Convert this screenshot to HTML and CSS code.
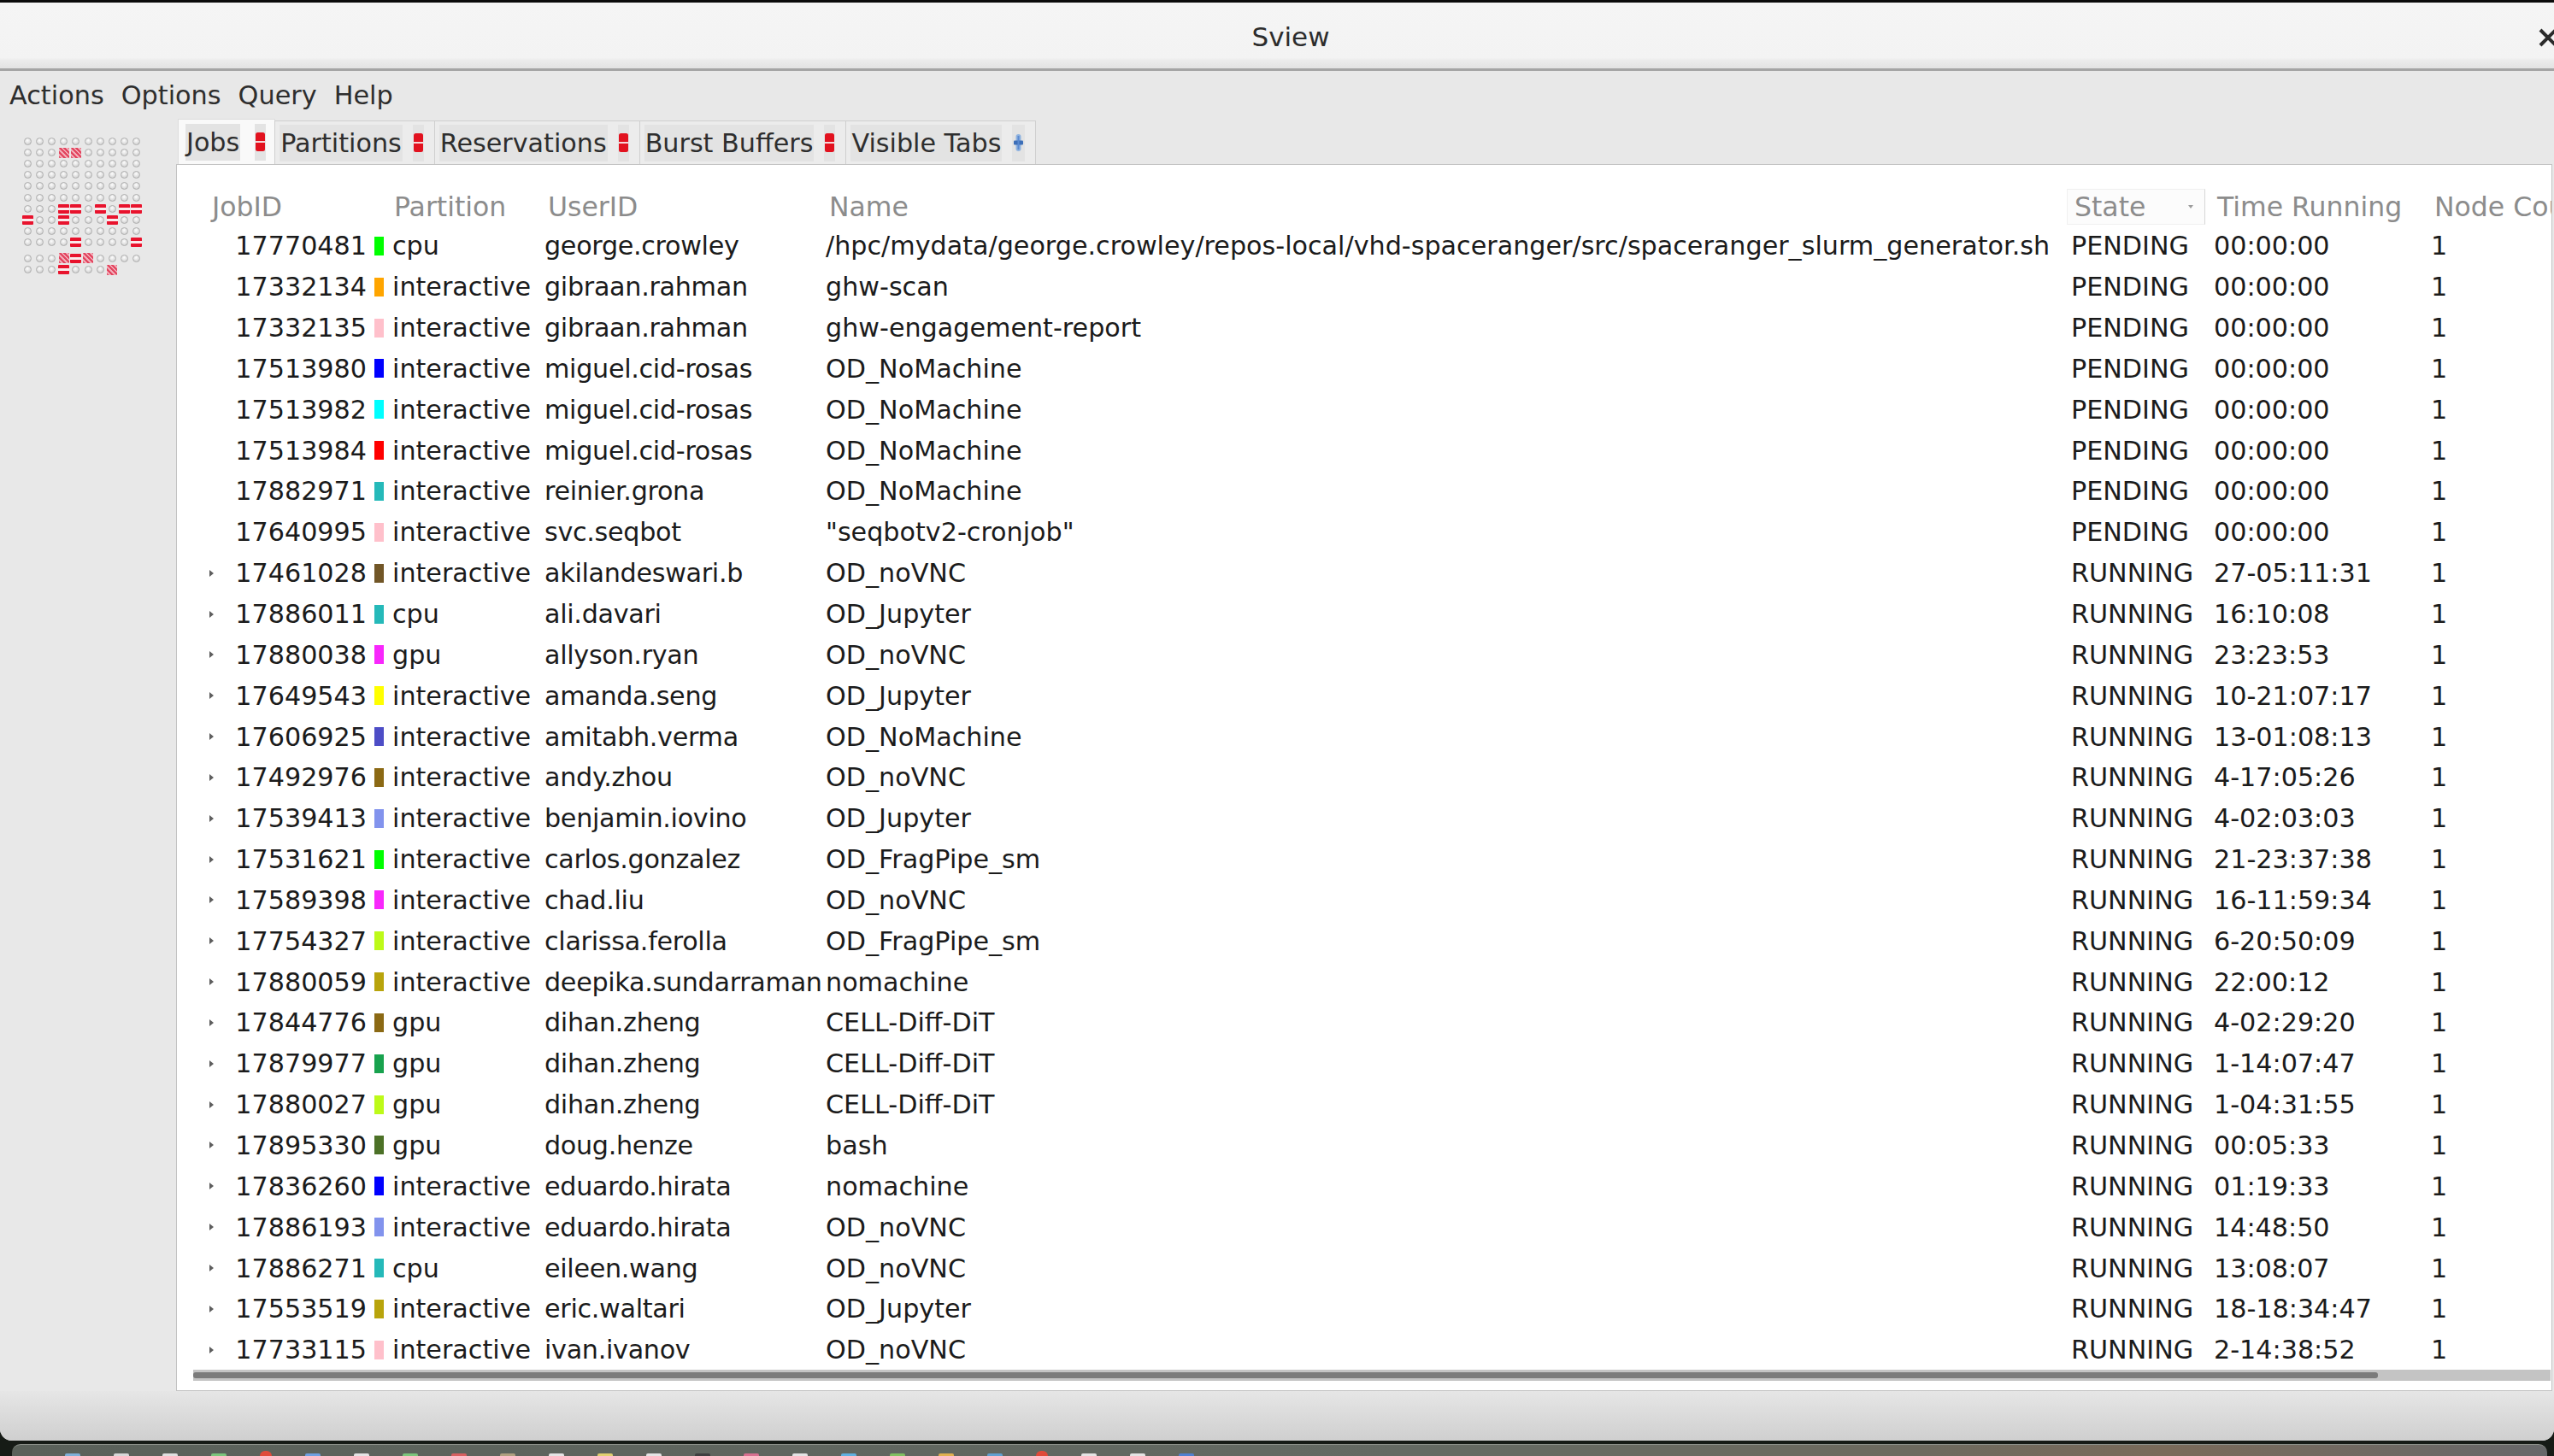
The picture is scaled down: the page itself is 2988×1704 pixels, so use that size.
FILE: index.html
```html
<!DOCTYPE html>
<html>
<head>
<meta charset="utf-8">
<title>Sview</title>
<link rel="stylesheet" href="styles.css">
</head>
<body>
<div class="window">
  <header class="titlebar">
    <div class="title">Sview</div>
    <div class="close"><svg width="24" height="22" viewBox="0 0 24 22"><path d="M2 2 L20 20 M20 2 L2 20" stroke="#2a2a2a" stroke-width="4" fill="none"/></svg></div>
  </header>
  <nav class="menubar">
    <span>Actions</span><span>Options</span><span>Query</span><span>Help</span>
  </nav>
  <div class="main">
    <aside class="nodes">
      <div class="nodeblock">
        <i class="n"></i><i class="n"></i><i class="n"></i><i class="n"></i><i class="n"></i><i class="n"></i><i class="n"></i><i class="n"></i><i class="n"></i><i class="n"></i>
        <i class="n"></i><i class="n"></i><i class="n"></i><i class="n m"></i><i class="n m"></i><i class="n"></i><i class="n"></i><i class="n"></i><i class="n"></i><i class="n"></i>
        <i class="n"></i><i class="n"></i><i class="n"></i><i class="n"></i><i class="n"></i><i class="n"></i><i class="n"></i><i class="n"></i><i class="n"></i><i class="n"></i>
        <i class="n"></i><i class="n"></i><i class="n"></i><i class="n"></i><i class="n"></i><i class="n"></i><i class="n"></i><i class="n"></i><i class="n"></i><i class="n"></i>
        <i class="n"></i><i class="n"></i><i class="n"></i><i class="n"></i><i class="n"></i><i class="n"></i><i class="n"></i><i class="n"></i><i class="n"></i><i class="n"></i>
        <i class="n"></i><i class="n"></i><i class="n"></i><i class="n"></i><i class="n"></i><i class="n"></i><i class="n"></i><i class="n"></i><i class="n"></i><i class="n"></i>
        <i class="n"></i><i class="n"></i><i class="n"></i><i class="n a"></i><i class="n a"></i><i class="n"></i><i class="n a"></i><i class="n"></i><i class="n a"></i><i class="n a"></i>
        <i class="n a"></i><i class="n"></i><i class="n"></i><i class="n a"></i><i class="n"></i><i class="n"></i><i class="n"></i><i class="n a"></i><i class="n"></i><i class="n"></i>
        <i class="n"></i><i class="n"></i><i class="n"></i><i class="n"></i><i class="n"></i><i class="n"></i><i class="n"></i><i class="n"></i><i class="n"></i><i class="n"></i>
        <i class="n"></i><i class="n"></i><i class="n"></i><i class="n"></i><i class="n a"></i><i class="n"></i><i class="n"></i><i class="n"></i><i class="n"></i><i class="n a"></i>
      </div>
      <div class="nodeblock">
        <i class="n"></i><i class="n"></i><i class="n"></i><i class="n m"></i><i class="n a"></i><i class="n m"></i><i class="n"></i><i class="n"></i><i class="n"></i><i class="n"></i>
        <i class="n"></i><i class="n"></i><i class="n"></i><i class="n a"></i><i class="n"></i><i class="n"></i><i class="n"></i><i class="n m"></i>
      </div>
    </aside>
    <section class="notebook">
      <div class="tabs">
        <div class="tab active"><span class="tab-label">Jobs</span><span class="tab-btn"><svg class="red" width="11" height="22" viewBox="0 0 11 22"><rect x="0" y="0" width="11" height="22" rx="2.5" fill="#e2121f"/><rect x="0" y="10" width="11" height="2" fill="#f6d6d8"/></svg></span></div>
        <div class="tab"><span class="tab-label">Partitions</span><span class="tab-btn"><svg class="red" width="11" height="22" viewBox="0 0 11 22"><rect x="0" y="0" width="11" height="22" rx="2.5" fill="#e2121f"/><rect x="0" y="10" width="11" height="2" fill="#f6d6d8"/></svg></span></div>
        <div class="tab"><span class="tab-label">Reservations</span><span class="tab-btn"><svg class="red" width="11" height="22" viewBox="0 0 11 22"><rect x="0" y="0" width="11" height="22" rx="2.5" fill="#e2121f"/><rect x="0" y="10" width="11" height="2" fill="#f6d6d8"/></svg></span></div>
        <div class="tab"><span class="tab-label">Burst Buffers</span><span class="tab-btn"><svg class="red" width="11" height="22" viewBox="0 0 11 22"><rect x="0" y="0" width="11" height="22" rx="2.5" fill="#e2121f"/><rect x="0" y="10" width="11" height="2" fill="#f6d6d8"/></svg></span></div>
        <div class="tab"><span class="tab-label">Visible Tabs</span><span class="tab-btn"><svg width="13" height="22" viewBox="0 0 13 22"><rect x="3.5" y="1" width="6" height="20" rx="3" fill="#8fb3e0"/><rect x="1" y="8.5" width="11" height="5" rx="1" fill="#3d6fb8"/><rect x="5.5" y="3" width="2" height="16" fill="#5a8ad0"/></svg></span></div>
      </div>
      <div class="page">
        <div class="table">
          <div class="thead">
            <div class="th c1">JobID</div>
            <div class="th c2">Partition</div>
            <div class="th c3">UserID</div>
            <div class="th c4">Name</div>
            <div class="th c5"><div class="sortbox"><span>State</span><i class="sortarrow"></i></div></div>
            <div class="th c6">Time Running</div>
            <div class="th c7">Node Count</div>
          </div>

          <div class="tr"><div class="c1"><i class="exp none"></i><span>17770481</span></div><div class="c2"><i class="sw" style="background:#00ff00"></i>cpu</div><div class="c3">george.crowley</div><div class="c4">/hpc/mydata/george.crowley/repos-local/vhd-spaceranger/src/spaceranger_slurm_generator.sh</div><div class="c5">PENDING</div><div class="c6">00:00:00</div><div class="c7">1</div></div>
          <div class="tr"><div class="c1"><i class="exp none"></i><span>17332134</span></div><div class="c2"><i class="sw" style="background:#ffa500"></i>interactive</div><div class="c3">gibraan.rahman</div><div class="c4">ghw-scan</div><div class="c5">PENDING</div><div class="c6">00:00:00</div><div class="c7">1</div></div>
          <div class="tr"><div class="c1"><i class="exp none"></i><span>17332135</span></div><div class="c2"><i class="sw" style="background:#ffc0cb"></i>interactive</div><div class="c3">gibraan.rahman</div><div class="c4">ghw-engagement-report</div><div class="c5">PENDING</div><div class="c6">00:00:00</div><div class="c7">1</div></div>
          <div class="tr"><div class="c1"><i class="exp none"></i><span>17513980</span></div><div class="c2"><i class="sw" style="background:#0000ff"></i>interactive</div><div class="c3">miguel.cid-rosas</div><div class="c4">OD_NoMachine</div><div class="c5">PENDING</div><div class="c6">00:00:00</div><div class="c7">1</div></div>
          <div class="tr"><div class="c1"><i class="exp none"></i><span>17513982</span></div><div class="c2"><i class="sw" style="background:#00ffff"></i>interactive</div><div class="c3">miguel.cid-rosas</div><div class="c4">OD_NoMachine</div><div class="c5">PENDING</div><div class="c6">00:00:00</div><div class="c7">1</div></div>
          <div class="tr"><div class="c1"><i class="exp none"></i><span>17513984</span></div><div class="c2"><i class="sw" style="background:#ff0000"></i>interactive</div><div class="c3">miguel.cid-rosas</div><div class="c4">OD_NoMachine</div><div class="c5">PENDING</div><div class="c6">00:00:00</div><div class="c7">1</div></div>
          <div class="tr"><div class="c1"><i class="exp none"></i><span>17882971</span></div><div class="c2"><i class="sw" style="background:#25b9b9"></i>interactive</div><div class="c3">reinier.grona</div><div class="c4">OD_NoMachine</div><div class="c5">PENDING</div><div class="c6">00:00:00</div><div class="c7">1</div></div>
          <div class="tr"><div class="c1"><i class="exp none"></i><span>17640995</span></div><div class="c2"><i class="sw" style="background:#ffc0cb"></i>interactive</div><div class="c3">svc.seqbot</div><div class="c4">"seqbotv2-cronjob"</div><div class="c5">PENDING</div><div class="c6">00:00:00</div><div class="c7">1</div></div>
          <div class="tr"><div class="c1"><i class="exp"></i><span>17461028</span></div><div class="c2"><i class="sw" style="background:#715627"></i>interactive</div><div class="c3">akilandeswari.b</div><div class="c4">OD_noVNC</div><div class="c5">RUNNING</div><div class="c6">27-05:11:31</div><div class="c7">1</div></div>
          <div class="tr"><div class="c1"><i class="exp"></i><span>17886011</span></div><div class="c2"><i class="sw" style="background:#25b9b9"></i>cpu</div><div class="c3">ali.davari</div><div class="c4">OD_Jupyter</div><div class="c5">RUNNING</div><div class="c6">16:10:08</div><div class="c7">1</div></div>
          <div class="tr"><div class="c1"><i class="exp"></i><span>17880038</span></div><div class="c2"><i class="sw" style="background:#f827fc"></i>gpu</div><div class="c3">allyson.ryan</div><div class="c4">OD_noVNC</div><div class="c5">RUNNING</div><div class="c6">23:23:53</div><div class="c7">1</div></div>
          <div class="tr"><div class="c1"><i class="exp"></i><span>17649543</span></div><div class="c2"><i class="sw" style="background:#ffff00"></i>interactive</div><div class="c3">amanda.seng</div><div class="c4">OD_Jupyter</div><div class="c5">RUNNING</div><div class="c6">10-21:07:17</div><div class="c7">1</div></div>
          <div class="tr"><div class="c1"><i class="exp"></i><span>17606925</span></div><div class="c2"><i class="sw" style="background:#4d4dc6"></i>interactive</div><div class="c3">amitabh.verma</div><div class="c4">OD_NoMachine</div><div class="c5">RUNNING</div><div class="c6">13-01:08:13</div><div class="c7">1</div></div>
          <div class="tr"><div class="c1"><i class="exp"></i><span>17492976</span></div><div class="c2"><i class="sw" style="background:#8b6914"></i>interactive</div><div class="c3">andy.zhou</div><div class="c4">OD_noVNC</div><div class="c5">RUNNING</div><div class="c6">4-17:05:26</div><div class="c7">1</div></div>
          <div class="tr"><div class="c1"><i class="exp"></i><span>17539413</span></div><div class="c2"><i class="sw" style="background:#8293ed"></i>interactive</div><div class="c3">benjamin.iovino</div><div class="c4">OD_Jupyter</div><div class="c5">RUNNING</div><div class="c6">4-02:03:03</div><div class="c7">1</div></div>
          <div class="tr"><div class="c1"><i class="exp"></i><span>17531621</span></div><div class="c2"><i class="sw" style="background:#00ff00"></i>interactive</div><div class="c3">carlos.gonzalez</div><div class="c4">OD_FragPipe_sm</div><div class="c5">RUNNING</div><div class="c6">21-23:37:38</div><div class="c7">1</div></div>
          <div class="tr"><div class="c1"><i class="exp"></i><span>17589398</span></div><div class="c2"><i class="sw" style="background:#f827fc"></i>interactive</div><div class="c3">chad.liu</div><div class="c4">OD_noVNC</div><div class="c5">RUNNING</div><div class="c6">16-11:59:34</div><div class="c7">1</div></div>
          <div class="tr"><div class="c1"><i class="exp"></i><span>17754327</span></div><div class="c2"><i class="sw" style="background:#bdfa19"></i>interactive</div><div class="c3">clarissa.ferolla</div><div class="c4">OD_FragPipe_sm</div><div class="c5">RUNNING</div><div class="c6">6-20:50:09</div><div class="c7">1</div></div>
          <div class="tr"><div class="c1"><i class="exp"></i><span>17880059</span></div><div class="c2"><i class="sw" style="background:#b8a40c"></i>interactive</div><div class="c3">deepika.sundarraman</div><div class="c4">nomachine</div><div class="c5">RUNNING</div><div class="c6">22:00:12</div><div class="c7">1</div></div>
          <div class="tr"><div class="c1"><i class="exp"></i><span>17844776</span></div><div class="c2"><i class="sw" style="background:#8b6914"></i>gpu</div><div class="c3">dihan.zheng</div><div class="c4">CELL-Diff-DiT</div><div class="c5">RUNNING</div><div class="c6">4-02:29:20</div><div class="c7">1</div></div>
          <div class="tr"><div class="c1"><i class="exp"></i><span>17879977</span></div><div class="c2"><i class="sw" style="background:#18a24e"></i>gpu</div><div class="c3">dihan.zheng</div><div class="c4">CELL-Diff-DiT</div><div class="c5">RUNNING</div><div class="c6">1-14:07:47</div><div class="c7">1</div></div>
          <div class="tr"><div class="c1"><i class="exp"></i><span>17880027</span></div><div class="c2"><i class="sw" style="background:#bdfa19"></i>gpu</div><div class="c3">dihan.zheng</div><div class="c4">CELL-Diff-DiT</div><div class="c5">RUNNING</div><div class="c6">1-04:31:55</div><div class="c7">1</div></div>
          <div class="tr"><div class="c1"><i class="exp"></i><span>17895330</span></div><div class="c2"><i class="sw" style="background:#4c7127"></i>gpu</div><div class="c3">doug.henze</div><div class="c4">bash</div><div class="c5">RUNNING</div><div class="c6">00:05:33</div><div class="c7">1</div></div>
          <div class="tr"><div class="c1"><i class="exp"></i><span>17836260</span></div><div class="c2"><i class="sw" style="background:#0000ff"></i>interactive</div><div class="c3">eduardo.hirata</div><div class="c4">nomachine</div><div class="c5">RUNNING</div><div class="c6">01:19:33</div><div class="c7">1</div></div>
          <div class="tr"><div class="c1"><i class="exp"></i><span>17886193</span></div><div class="c2"><i class="sw" style="background:#8293ed"></i>interactive</div><div class="c3">eduardo.hirata</div><div class="c4">OD_noVNC</div><div class="c5">RUNNING</div><div class="c6">14:48:50</div><div class="c7">1</div></div>
          <div class="tr"><div class="c1"><i class="exp"></i><span>17886271</span></div><div class="c2"><i class="sw" style="background:#25b9b9"></i>cpu</div><div class="c3">eileen.wang</div><div class="c4">OD_noVNC</div><div class="c5">RUNNING</div><div class="c6">13:08:07</div><div class="c7">1</div></div>
          <div class="tr"><div class="c1"><i class="exp"></i><span>17553519</span></div><div class="c2"><i class="sw" style="background:#b8a40c"></i>interactive</div><div class="c3">eric.waltari</div><div class="c4">OD_Jupyter</div><div class="c5">RUNNING</div><div class="c6">18-18:34:47</div><div class="c7">1</div></div>
          <div class="tr"><div class="c1"><i class="exp"></i><span>17733115</span></div><div class="c2"><i class="sw" style="background:#ffc0cb"></i>interactive</div><div class="c3">ivan.ivanov</div><div class="c4">OD_noVNC</div><div class="c5">RUNNING</div><div class="c6">2-14:38:52</div><div class="c7">1</div></div>
        </div>
        <div class="hscroll"><div class="thumb"></div></div>
      </div>
    </section>
  </div>
  <div class="winfoot"></div>
</div>
<div class="desk">
  <div class="taskbar">
    <i class="ti" style="background:#7fb0d8"></i><i class="ti" style="background:#d8d8d8"></i><i class="ti" style="background:#e0e0e0"></i><i class="ti" style="background:#7cc57c"></i><i class="ti dot"></i><i class="ti" style="background:#6fa0e0"></i><i class="ti" style="background:#e4e4e4"></i><i class="ti" style="background:#7cc57c"></i><i class="ti" style="background:#d86060"></i><i class="ti" style="background:#b0a080"></i><i class="ti" style="background:#e4e4e4"></i><i class="ti" style="background:#e0d070"></i><i class="ti" style="background:#e4e4e4"></i><i class="ti" style="background:#404040"></i><i class="ti" style="background:#d87090"></i><i class="ti" style="background:#e4e4e4"></i><i class="ti" style="background:#60b0e0"></i><i class="ti" style="background:#80c060"></i><i class="ti" style="background:#e0b050"></i><i class="ti" style="background:#60a0d0"></i><i class="ti dot"></i><i class="ti" style="background:#e4e4e4"></i><i class="ti" style="background:#e4e4e4"></i><i class="ti" style="background:#5080d0"></i>
  </div>
</div>
</body>
</html>
```

FILE: styles.css
```css
* {
  box-sizing: border-box;
  margin: 0;
  padding: 0;
}

html, body {
  width: 2988px;
  height: 1704px;
  overflow: hidden;
  background: #161b16;
  font-family: "DejaVu Sans", "Noto Sans", sans-serif;
}

.window {
  height: 1686px;
  background: #e8e8e8;
  border-radius: 0 0 14px 14px;
  overflow: hidden;
  display: flex;
  flex-direction: column;
}

/* title bar */
.titlebar {
  flex: none;
  height: 83px;
  display: flex;
  align-items: center;
  padding-left: 50px;
  border-top: 3px solid #0b0b0b;
  border-bottom: 3px solid #a4a4a4;
  background: linear-gradient(#f5f5f5 0, #f3f3f3 84%, #ebebeb 88%, #e2e2e2 100%);
}

.title {
  flex: 1;
  text-align: center;
  font-size: 31px;
  color: #2c2c2c;
  padding-top: 2px;
}

.close {
  flex: none;
  width: 18px;
  height: 22px;
  overflow: hidden;
  margin-top: 4px;
}

.close svg {
  display: block;
}

/* menu bar */
.menubar {
  flex: none;
  height: 56px;
  display: flex;
  align-items: center;
  padding-left: 1px;
  font-size: 30.3px;
  color: #2e2e2e;
}

.menubar span {
  padding: 0 10px;
}

/* main area */
.main {
  flex: none;
  height: 1489px;
  display: flex;
}

.nodes {
  flex: none;
  width: 206px;
  padding: 20px 0 0 25px;
}

.nodeblock {
  display: grid;
  grid-template-columns: repeat(10, 14.2px);
  grid-auto-rows: 13.1px;
}

.nodeblock + .nodeblock {
  margin-top: 6px;
}

.n {
  display: block;
  justify-self: center;
  align-self: center;
  width: 9px;
  height: 9px;
  border-radius: 50%;
  border: 1px solid #aeaeae;
  background: radial-gradient(circle at 45% 35%, #fdfdfd 0, #e2e2e2 50%, #c4c4c4 100%);
}

.n.a {
  width: 13px;
  height: 11px;
  border: none;
  border-radius: 1px;
  background: linear-gradient(#e8132d 0, #e8132d 40%, #fbe9eb 40%, #fbe9eb 60%, #e8132d 60%, #e8132d 100%);
}

.n.m {
  width: 12px;
  height: 12px;
  border: none;
  border-radius: 1px;
  background: repeating-linear-gradient(45deg, #e2455f 0, #e2455f 2px, #f2aab6 2px, #f2aab6 4px);
}

/* notebook */
.notebook {
  flex: 1;
  min-width: 0;
  margin-right: 2px;
  display: flex;
  flex-direction: column;
}

.tabs {
  flex: none;
  height: 53px;
  display: flex;
  align-items: flex-end;
  padding-left: 2px;
}

.tab {
  height: 51px;
  display: flex;
  align-items: center;
  padding: 0 12px 0 5px;
  border: 1px solid #cfcfcf;
  border-bottom: none;
  margin-left: -1px;
  background: #ececec;
  font-size: 30.2px;
  color: #2e2e2e;
}

.tab.active {
  height: 53px;
  padding: 0 10px 0 8px;
  margin-left: 0;
  background: #f9f9f9;
  border-color: #dcdcdc;
}

.tab-label {
  display: flex;
  align-items: center;
  height: 43px;
  padding: 0 1px;
  background: #e3e3e3;
}

.tab-btn {
  display: flex;
  align-items: center;
  height: 43px;
  margin-left: 12px;
  padding: 0 1px;
  background: #e3e3e3;
}

.tab.active .tab-btn {
  margin-left: 17px;
}

/* page */
.page {
  flex: none;
  height: 1436px;
  border: 1px solid #c3c3c3;
  background: #ffffff;
  display: flex;
  flex-direction: column;
  overflow: hidden;
}

.table {
  flex: none;
  height: 1410px;
  padding-top: 26px;
  overflow: hidden;
}

.thead,
.tr {
  display: grid;
  grid-template-columns: 227px 202px 328px 1456px 168px 254px 300px;
  align-items: center;
  width: max-content;
  white-space: nowrap;
}

.thead {
  height: 45px;
  font-size: 31.5px;
  color: #8c8c8c;
}

.tr {
  height: 47.85px;
  font-size: 30.2px;
  color: #1b1b1b;
}

.th.c1 { padding-left: 41px; }
.th.c2 { padding-left: 27px; }
.th.c3 { padding-left: 5px; }
.th.c4 { padding-left: 6px; }
.th.c6 { padding-left: 6px; }
.th.c7 { padding-left: 6px; }

.th.c5 {
  height: 45px;
  display: flex;
  align-items: center;
}

.sortbox {
  margin-left: -2px;
  width: 162px;
  height: 42px;
  display: flex;
  align-items: center;
  justify-content: space-between;
  padding: 0 13px 0 8px;
  background: #fcfcfc;
  border: 1px solid #f0f0f0;
  border-right-color: #d6d6d6;
}

.sortarrow {
  display: block;
  width: 0;
  height: 0;
  border-left: 3px solid transparent;
  border-right: 3px solid transparent;
  border-top: 4px solid #9c9c9c;
}

.tr .c1 {
  display: flex;
  align-items: center;
  justify-content: space-between;
  padding: 0 5px 0 38px;
}

.exp {
  display: block;
  width: 0;
  height: 0;
  border-top: 4px solid transparent;
  border-bottom: 4px solid transparent;
  border-left: 5px solid #5e5e5e;
}

.exp.none {
  visibility: hidden;
}

.tr .c2 {
  display: flex;
  align-items: center;
}

.sw {
  display: block;
  width: 11px;
  height: 22px;
  margin: 0 10px 0 4px;
}

.tr .c3 { padding-left: 1px; letter-spacing: -0.3px; }
.tr .c4 { padding-left: 2px; }
.tr .c5 { padding-left: 3px; }
.tr .c6 { padding-left: 2px; }
.tr .c7 { padding-left: 2px; }

.hscroll {
  flex: none;
  height: 13px;
  margin: 0 1px 11px 19px;
  padding: 3px 3px 3px 0;
  background: #c4c4c4;
}

.thumb {
  width: 2556px;
  height: 100%;
  border-radius: 3px;
  background: #7b7b7b;
}

.winfoot {
  flex: 1;
  background: linear-gradient(#e6e6e6, #cfcfcf);
}

/* desktop / taskbar */
.desk {
  height: 18px;
  padding: 4px 8px 0 14px;
}

.taskbar {
  height: 14px;
  border-radius: 10px 10px 0 0;
  border-top: 1px solid #8c918a;
  background: linear-gradient(90deg, #5a615a 0, #646a63 55%, #6d6a5f 75%, #7a6b5a 85%, #67686a 100%);
  display: flex;
  align-items: flex-end;
  gap: 39px;
  padding-left: 62px;
}

.ti {
  display: block;
  width: 18px;
  height: 3px;
  border-radius: 2px 2px 0 0;
}

.ti.dot {
  width: 14px;
  height: 6px;
  border-radius: 7px 7px 0 0;
  background: #e04a3a;
}
```
